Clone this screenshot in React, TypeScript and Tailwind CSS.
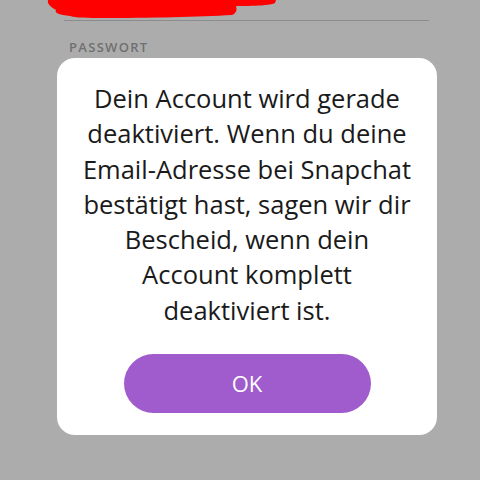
export default function App() {
  return (
    <div className="h-[480px] w-[480px] overflow-hidden bg-[#acacac] font-['Open_Sans',sans-serif]">
      <svg className="block h-[20px] w-[480px]" viewBox="0 0 480 20">
        <path
          d="M48 0 L276 0 L275 3 C272 5 260 6 236 6 C237 9 237 13 232 15 C200 17 150 18 100 18 C80 18 72 17 70 16 C60 15 54 13 56 10 C50 7 47 3 48 0 Z"
          fill="#ff0000"
        />
      </svg>
      <div className="ml-[64px] mr-[51px] h-px bg-[#8c8c8c]" />
      <p className="mt-[19px] pl-[69px] text-[13px] font-semibold leading-[14px] tracking-[0.1em] text-[#707070]">
        PASSWORT
      </p>
      <div className="ml-[57px] mr-[43px] mt-[4px] flex h-[377px] flex-col items-center rounded-[18px] bg-white pt-[23px]">
        <p className="whitespace-nowrap text-center text-[25.5px] leading-[35.3px] text-[#1a1a1a]">
          Dein Account wird gerade
          <br />
          deaktiviert. Wenn du deine
          <br />
          Email-Adresse bei Snapchat
          <br />
          bestätigt hast, sagen wir dir
          <br />
          Bescheid, wenn dein
          <br />
          Account komplett
          <br />
          deaktiviert ist.
        </p>
        <button className="mt-[26px] flex h-[59px] w-[247px] items-center justify-center rounded-full bg-[#a05ccc] text-[22px] text-white">
          OK
        </button>
      </div>
    </div>
  )
}
